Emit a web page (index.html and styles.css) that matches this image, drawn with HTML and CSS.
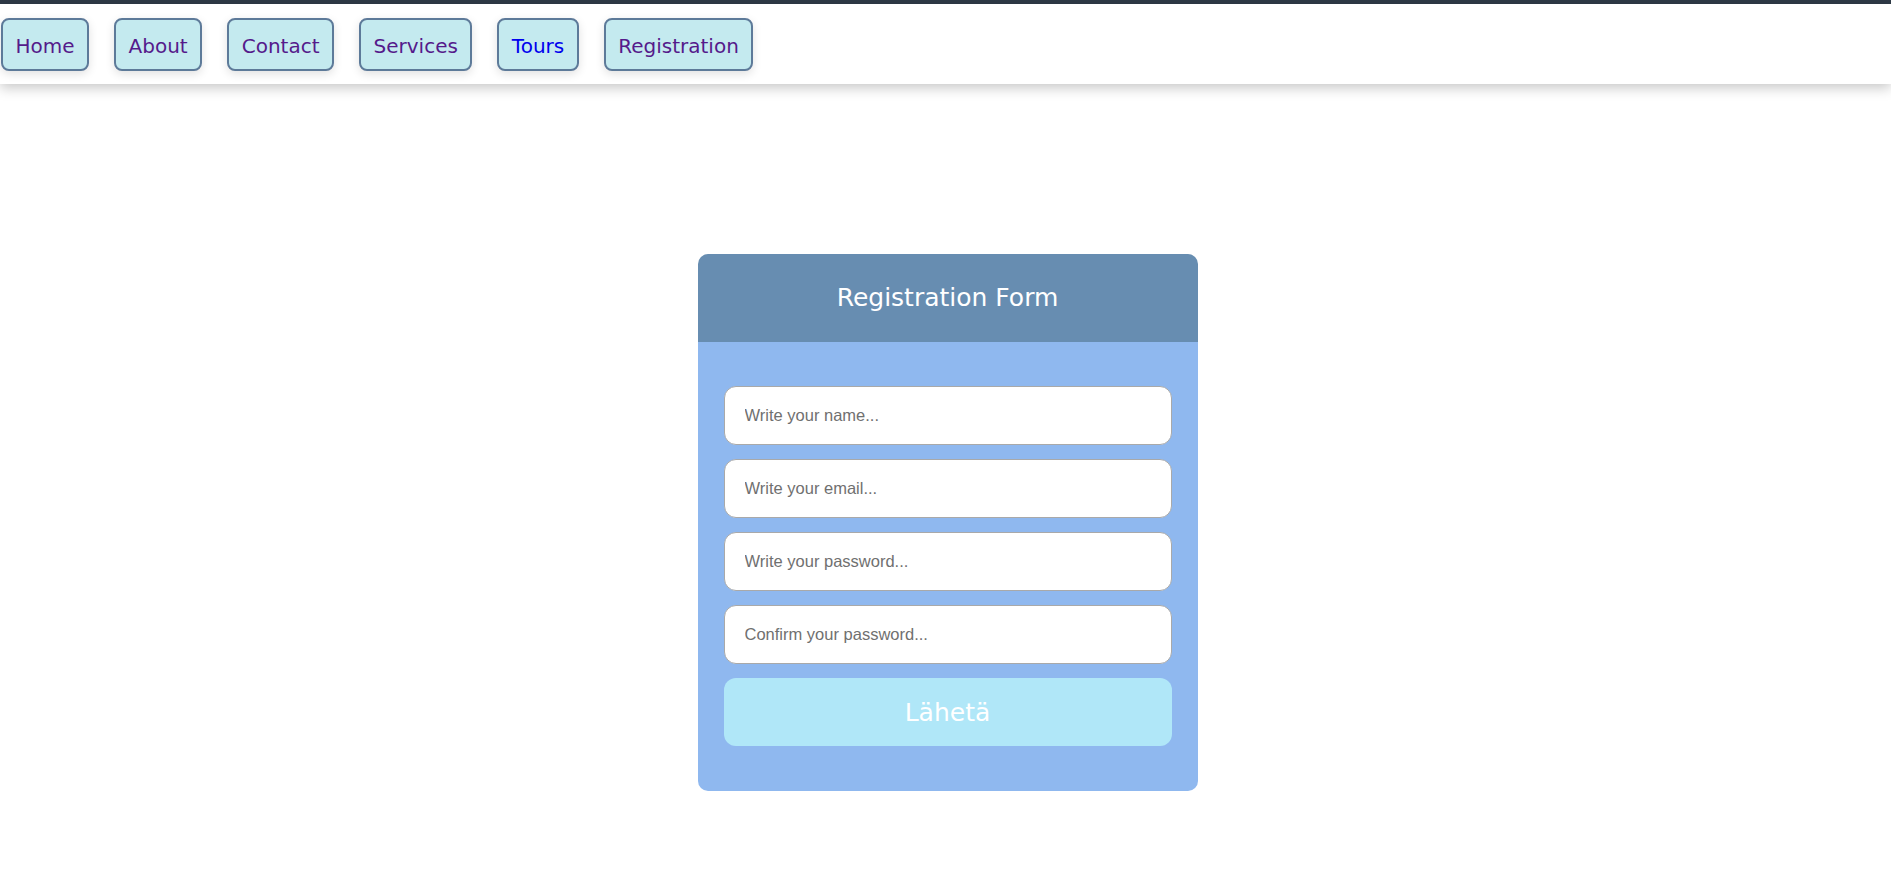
FILE: index.html
```html
<!DOCTYPE html>
<html lang="fi">
<head>
<meta charset="utf-8">
<title>Registration</title>
<link rel="stylesheet" href="styles.css">
</head>
<body>
<div class="topline"></div>
<nav class="nav">
  <a class="nav-btn visited" href="#home">Home</a>
  <a class="nav-btn visited" href="#about">About</a>
  <a class="nav-btn visited" href="#contact">Contact</a>
  <a class="nav-btn visited" href="#services">Services</a>
  <a class="nav-btn fresh" href="#tours">Tours</a>
  <a class="nav-btn visited" href="#registration">Registration</a>
</nav>
<main class="main">
  <form class="card">
    <div class="card-head">Registration Form</div>
    <div class="card-body">
      <input class="field" type="text" placeholder="Write your name...">
      <input class="field" type="email" placeholder="Write your email...">
      <input class="field" type="password" placeholder="Write your password...">
      <input class="field" type="password" placeholder="Confirm your password...">
      <button class="send" type="button">Lähetä</button>
    </div>
  </form>
</main>
</body>
</html>
```
FILE: styles.css
```css
html, body {
  margin: 0;
  padding: 0;
  background: #ffffff;
}
body {
  font-family: "DejaVu Sans", Verdana, sans-serif;
}
.topline {
  height: 4px;
  background: #2f3a47;
}
.nav {
  display: flex;
  align-items: center;
  gap: 25px;
  padding: 14px 0 13px 1px;
  background: #ffffff;
  box-shadow: 0 4px 12px rgba(0, 0, 0, 0.22);
  position: relative;
  z-index: 1;
}
.nav-btn {
  display: block;
  box-sizing: border-box;
  height: 53px;
  line-height: 45px;
  padding: 4px 12.5px 0;
  border: 2px solid #5d7a99;
  border-radius: 8px;
  background: #c4eaef;
  font-size: 20px;
  text-decoration: none;
  box-shadow: 0 3px 10px rgba(0, 0, 0, 0.12);
}
.visited { color: #551a8b; }
.fresh { color: #0000ee; }
.main {
  display: flex;
  justify-content: center;
  padding-top: 170px;
  padding-left: 4px;
}
.card {
  width: 500px;
  border-radius: 10px;
  overflow: hidden;
  margin: 0;
}
.card-head {
  height: 88px;
  line-height: 88px;
  background: #678db1;
  color: #ffffff;
  text-align: center;
  font-size: 25px;
}
.card-body {
  background: #8fb8ef;
  padding: 44px 26px 45px;
  display: flex;
  flex-direction: column;
  gap: 14px;
}
.field {
  box-sizing: border-box;
  height: 59px;
  width: 100%;
  margin: 0;
  padding: 0 20px;
  border: 1px solid #a9a9a9;
  border-radius: 12px;
  background: #ffffff;
  font-family: "Liberation Sans", Arial, sans-serif;
  font-size: 16.5px;
  color: #333;
}
.field::placeholder {
  color: #707070;
}
.send {
  box-sizing: border-box;
  height: 68px;
  width: 100%;
  border: none;
  border-radius: 12px;
  background: #b0e7f8;
  color: #ffffff;
  font-family: "DejaVu Sans", Verdana, sans-serif;
  font-size: 25px;
}
```
